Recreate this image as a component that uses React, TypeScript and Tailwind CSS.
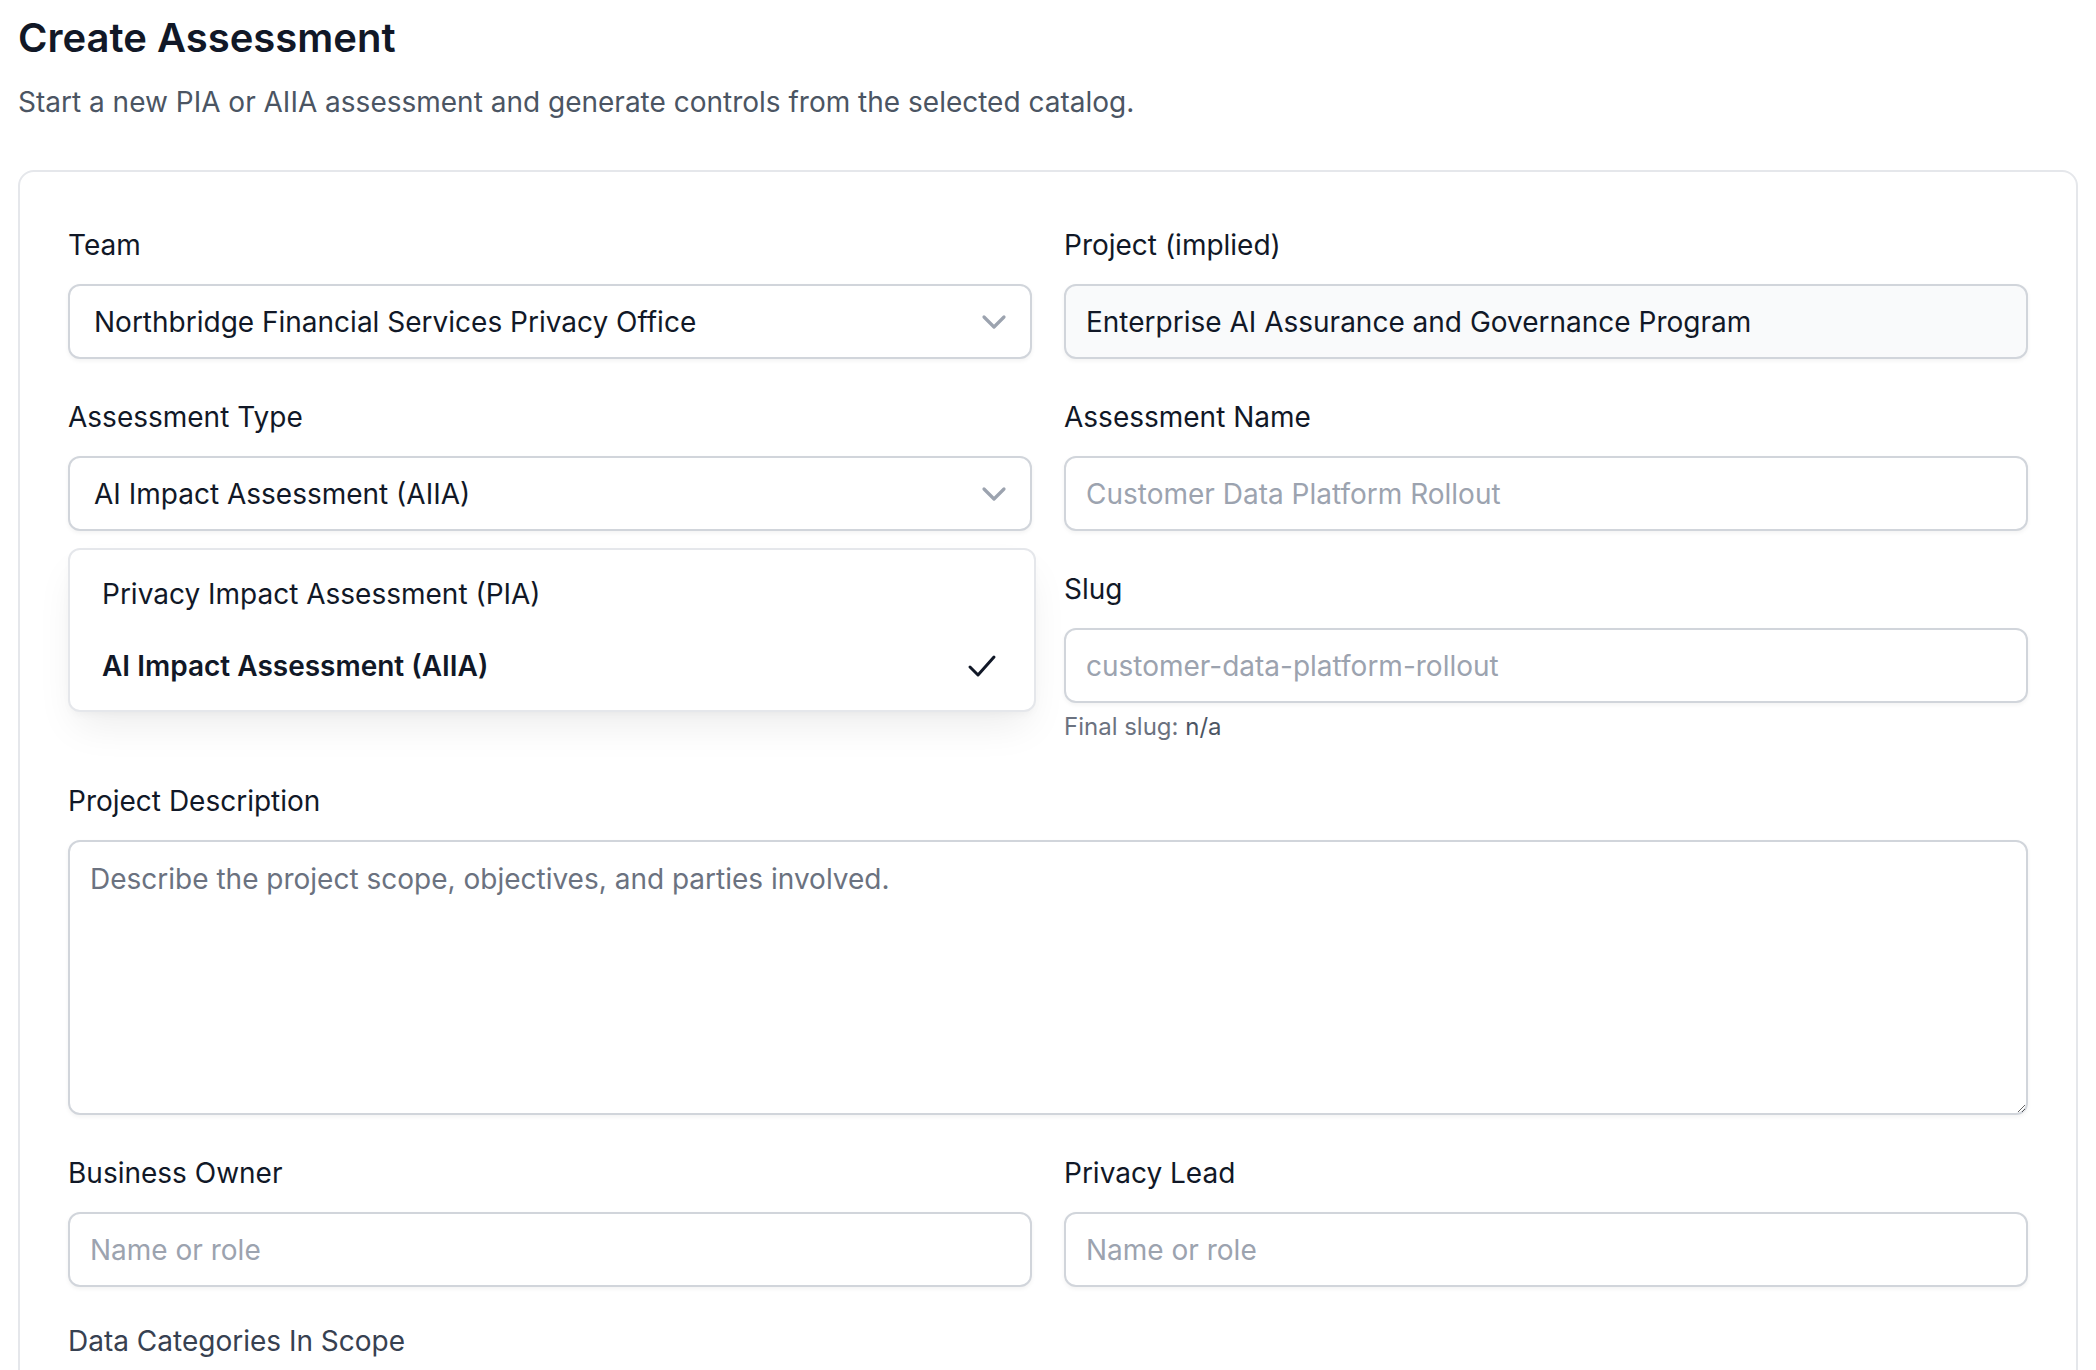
import React from 'react';

const labelClass = 'block text-[28px] leading-[50px] mb-[14px] text-[#111827]';
const inputBase =
  'block w-full h-[75px] rounded-[12px] border-2 border-[#d1d5db] px-[20px] text-[28px] text-[#111827] shadow-[0_2px_4px_rgba(0,0,0,0.05)] outline-none placeholder:text-[#9ca3af]';

const Chevron = () => (
  <svg className="w-[40px] h-[40px] text-[#9ca3af]" viewBox="0 0 20 20" fill="none" stroke="currentColor" strokeWidth="1.6">
    <path d="M5 7.5l5 5 5-5" strokeLinecap="round" strokeLinejoin="round" />
  </svg>
);

const SelectBox: React.FC<{ value: string }> = ({ value }) => (
  <button className="flex items-center justify-between w-full h-[75px] rounded-[12px] border-2 border-[#d1d5db] bg-white pl-[24px] pr-[16px] text-[28px] text-[#111827] shadow-[0_2px_4px_rgba(0,0,0,0.05)]">
    <span>{value}</span>
    <Chevron />
  </button>
);

const Field: React.FC<{ label: string; placeholder?: string; children?: React.ReactNode }> = ({ label, placeholder, children }) => (
  <div>
    <label className={labelClass}>{label}</label>
    {children || <input className={`${inputBase} bg-white`} placeholder={placeholder} />}
  </div>
);

export default function App() {
  return (
    <div className="h-screen overflow-hidden bg-white px-[18px] font-['Inter',sans-serif]">
      <h1 className="pt-[10px] text-[40px] leading-[56px] font-semibold text-[#111827]">Create Assessment</h1>
      <p className="mt-[16px] text-[28px] leading-[40px] text-[#4b5563]">
        Start a new PIA or AIIA assessment and generate controls from the selected catalog.
      </p>

      <div className="mt-[48px] min-h-[1300px] rounded-[16px] border-2 border-[#e5e7eb] bg-white p-[48px]">
        <div className="grid grid-cols-2 gap-x-[32px] gap-y-[33px]">
          <Field label="Team">
            <SelectBox value="Northbridge Financial Services Privacy Office" />
          </Field>
          <Field label="Project (implied)">
            <input
              className={`${inputBase} bg-[#f9fafb]`}
              readOnly
              value="Enterprise AI Assurance and Governance Program"
            />
          </Field>

          <Field label="Assessment Type">
            <div className="relative">
              <SelectBox value="AI Impact Assessment (AIIA)" />
              <div className="absolute left-0 top-[92px] z-10 w-[968px] rounded-[12px] border-2 border-[#e5e7eb] bg-white p-[8px] shadow-[0_20px_40px_-8px_rgba(0,0,0,0.08),0_4px_8px_-2px_rgba(0,0,0,0.04)]">
                <div className="flex items-center h-[72px] px-[24px] text-[28px] text-[#111827]">
                  Privacy Impact Assessment (PIA)
                </div>
                <div className="flex items-center justify-between h-[72px] pl-[24px] pr-[28px] text-[28px] font-semibold text-[#111827]">
                  <span>AI Impact Assessment (AIIA)</span>
                  <svg className="w-[32px] h-[32px]" viewBox="0 0 16 16" fill="none" stroke="currentColor" strokeWidth="1.5">
                    <path d="M2 8.5l4 4 8-9" strokeLinecap="round" strokeLinejoin="round" />
                  </svg>
                </div>
              </div>
            </div>
          </Field>
          <Field label="Assessment Name" placeholder="Customer Data Platform Rollout" />

          <div />
          <div>
            <Field label="Slug" placeholder="customer-data-platform-rollout" />
            <p className="mt-[8px] text-[24px] leading-[32px] text-[#6b7280]">
              Final slug: <span className="text-[#4b5563]">n/a</span>
            </p>
          </div>

          <div className="col-span-2">
            <Field label="Project Description">
              <textarea
                className="block w-full h-[275px] rounded-[12px] border-2 border-[#d1d5db] bg-white px-[20px] pt-[15px] pb-[12px] text-[28px] leading-[44px] text-[#111827] shadow-[0_2px_4px_rgba(0,0,0,0.05)] outline-none placeholder:text-[#6b7280]"
                placeholder="Describe the project scope, objectives, and parties involved."
              />
            </Field>
          </div>

          <Field label="Business Owner" placeholder="Name or role" />
          <Field label="Privacy Lead" placeholder="Name or role" />

          <div className="col-span-2 -mt-[3px]">
            <p className="text-[28px] leading-[48px] text-[#374151]">Data Categories In Scope</p>
          </div>
        </div>
      </div>
    </div>
  );
}
